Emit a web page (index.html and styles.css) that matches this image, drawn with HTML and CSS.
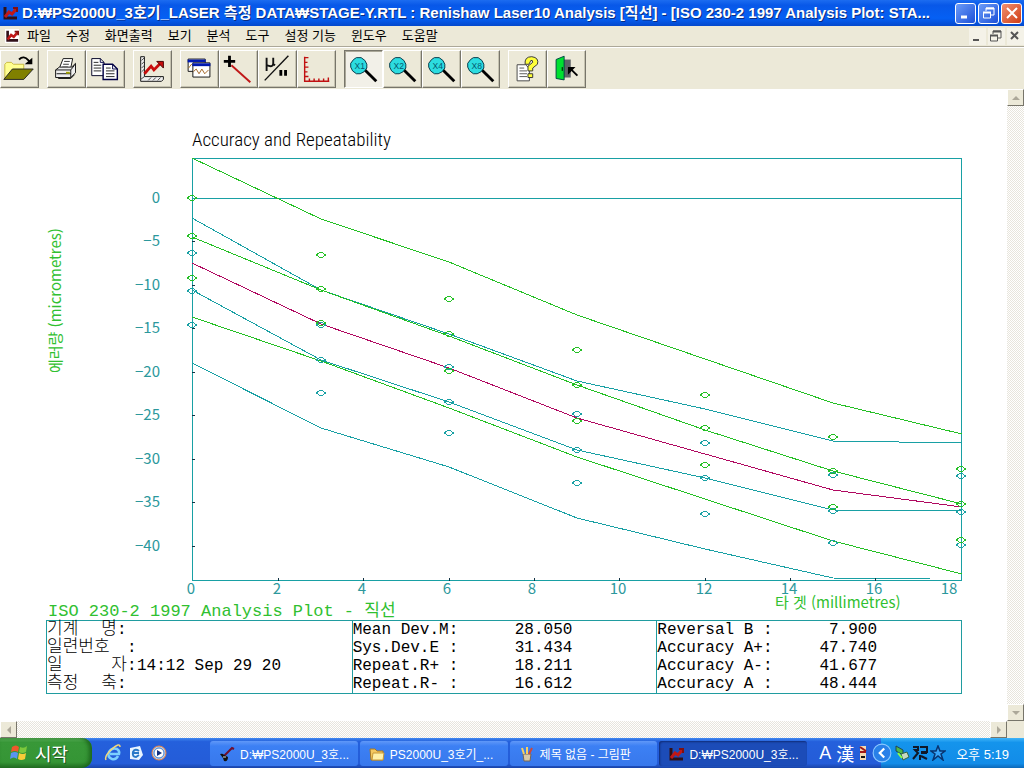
FILE: index.html
```html
<!DOCTYPE html>
<html lang="ko">
<head>
<meta charset="utf-8">
<title>Renishaw Laser10 Analysis</title>
<link rel="stylesheet" href="styles.css">
</head>
<body>
<svg class="defs" aria-hidden="true">
  <defs>
    <symbol id="app" viewBox="0 0 16 16"><path d="M3 2v11h12" fill="none" stroke="#301018" stroke-width="3"/><path d="M3 12l4-5 3 2 5-6" fill="none" stroke="#c01818" stroke-width="3"/><path d="M11 3h4v4" fill="none" stroke="#801010" stroke-width="2"/></symbol>
    <symbol id="lens" viewBox="0 0 39 38"><path d="M21 20l12 12" stroke="#000" stroke-width="3"/><path d="M12 7h5l4 3 2 4v4l-3 4-4 2h-4l-4-3-2-4v-4l3-4z" fill="#2cdce0" stroke="#034" stroke-width="1"/></symbol>
    <symbol id="restore" viewBox="0 0 16 16"><path d="M5 6V3h8v7h-3" fill="none" stroke="currentColor"/><path d="M5 3.500h8M2 7.500h8" stroke="currentColor" stroke-width="2"/><path d="M2.500 7v6h7V7" fill="none" stroke="currentColor"/></symbol>
    <g id="d"><path d="M-5 0L0-3 5 0 0 3z" fill="none"/></g>
  </defs>
</svg>
<div class="window">
  <header class="titlebar">
    <svg class="app-icon"><use href="#app"/></svg>
    <h1 class="title">D:₩PS2000U_3호기_LASER 측정 DATA₩STAGE-Y.RTL : Renishaw Laser10 Analysis [직선] - [ISO 230-2 1997 Analysis Plot: STA...</h1>
    <div class="caption-buttons">
      <button class="cap" aria-label="최소화"><svg viewBox="0 0 16 16"><path d="M3 12h6" stroke="#fff" stroke-width="3"/></svg></button>
      <button class="cap" aria-label="복원"><svg viewBox="0 0 16 16"><use href="#restore"/></svg></button>
      <button class="cap close" aria-label="닫기"><svg viewBox="0 0 16 16"><path d="M3 3l10 10M13 3L3 13" stroke="#fff" stroke-width="2"/></svg></button>
    </div>
  </header>
  <nav class="menubar">
    <svg class="app-icon"><use href="#app"/></svg>
    <button>파일</button><button>수정</button><button>화면출력</button><button>보기</button><button>분석</button><button>도구</button><button>설정 기능</button><button>윈도우</button><button>도움말</button>
    <div class="child-buttons">
      <button aria-label="문서 최소화"><svg viewBox="0 0 16 16"><path d="M4 12h6" stroke="#555" stroke-width="2"/></svg></button>
      <button aria-label="문서 복원"><svg viewBox="0 0 16 16"><use href="#restore"/></svg></button>
      <button aria-label="문서 닫기"><svg viewBox="0 0 16 16"><path d="M4 4l7 7M11 4l-7 7" stroke="#555" stroke-width="2"/></svg></button>
    </div>
  </nav>
  <div class="toolbar" role="toolbar">
    <div class="group">
      <button class="tool" aria-label="열기"><svg viewBox="0 0 39 38"><path d="M4 29V14l2-2h5l2 2h11v5" fill="#ffff90" stroke="#c8b840"/><path d="M3 30l9-11h22l-10 11z" fill="#808000" stroke="#222"/><path d="M19 9q5-5 10 1l3 3" fill="none" stroke="#000" stroke-width="2"/><path d="M33 7v7h-8z"/></svg></button>
    </div>
    <div class="group">
      <button class="tool" aria-label="인쇄"><svg viewBox="0 0 39 38"><path d="M12 18l4-10h10l-2 10z" fill="#fff" stroke="#111"/><path d="M17 11h6M16 14h6M15 17h6" stroke="#333"/><path d="M8 20l4-3h13l4-4v10l-5 5H8z" fill="#eee" stroke="#111"/><path d="M8 20h16l4-5M24 20v8M9 24h15M11 28v1h13l4-4" fill="none" stroke="#111"/><path d="M19 23h4" stroke="#a0a000" stroke-width="2"/></svg></button>
      <button class="tool" aria-label="복사"><svg viewBox="0 0 39 38"><path d="M5 8h9l4 4v14H5z" fill="#fff" stroke="#002"/><path d="M17 14h10l5 5v11H17z" fill="#fff" stroke="#004" stroke-width="1.500"/><path d="M14 8v4h4M27 14v5h5" fill="none" stroke="#004"/><path d="M7 12h5M7 15h8M7 18h8M7 21h8M20 18h5M20 21h9M20 24h9M20 27h9" stroke="#222"/></svg></button>
    </div>
    <div class="group">
      <button class="tool" aria-label="그래프"><svg viewBox="0 0 39 38"><path d="M7 6h4v21h20v3l-2 2H7z" fill="#eee" stroke="#111"/><path d="M7 30l4-3M8 10l3-3M8 14l3-3M8 18l3-3M8 22l3-3M15 31l3-3M20 31l3-3M25 31l3-3" stroke="#444"/><path d="M11 24l7-8 3 4 8-8" fill="none" stroke="#c80c0c" stroke-width="3"/><path d="M24 11h7v7z" fill="#c80c0c" stroke="#400"/></svg></button>
    </div>
    <div class="group">
      <button class="tool" aria-label="창"><svg viewBox="0 0 39 38"><path d="M7.500 8.500h18v13h-18z" fill="#fff" stroke="#111"/><path d="M7 9h19v3H7z" fill="#0018b0"/><path d="M8 18l3-4 4 4" fill="none" stroke="#aa7020"/><path d="M12.500 12.500h18v15h-18z" fill="#fff" stroke="#111"/><path d="M12 13h19v3H12z" fill="#0018b0"/><path d="M13 22l3-3 3 5 3-5 3 5 4-4" fill="none" stroke="#a06020"/></svg></button>
      <button class="tool" aria-label="점"><svg viewBox="0 0 39 38"><path d="M12 15l20 18" stroke="#c01818" stroke-width="2"/><path d="M10 5v12M4 11h12" stroke="#000" stroke-width="3"/></svg></button>
      <button class="tool" aria-label="단위"><svg viewBox="0 0 39 38"><path d="M31 5L6 31" stroke="#111" stroke-width="1.500"/><path d="M8 7v14M8 15q7 3 7-2V7m0 7l2 1" fill="none" stroke="#111" stroke-width="2"/><path d="M23 20v6M28 20v6" stroke="#000" stroke-width="3"/></svg></button>
      <button class="tool" aria-label="눈금"><svg viewBox="0 0 39 38"><path d="M7 6v26h26M7 7h4M7 12h3M7 17h4M7 22h3M7 27h4M12 32v-3M17 32v-3M22 32v-3M27 32v-3M32 32v-4" fill="none" stroke="#c01010" stroke-width="1.500"/></svg></button>
    </div>
    <div class="group">
      <button class="tool pressed" aria-pressed="true"><svg viewBox="0 0 39 38"><use href="#lens"/><text x="10" y="19">X1</text></svg></button>
      <button class="tool"><svg viewBox="0 0 39 38"><use href="#lens"/><text x="10" y="19">X2</text></svg></button>
      <button class="tool"><svg viewBox="0 0 39 38"><use href="#lens"/><text x="10" y="19">X4</text></svg></button>
      <button class="tool"><svg viewBox="0 0 39 38"><use href="#lens"/><text x="10" y="19">X8</text></svg></button>
    </div>
    <div class="group">
      <button class="tool" aria-label="도움말"><svg viewBox="0 0 39 38"><path d="M8.500 14.500h9l4 4v13h-13z" fill="#fff" stroke="#444"/><path d="M11 18h5M11 21h8M11 24h8M11 27h8" stroke="#555"/><path d="M17 14q-1-8 7-8 8 1 6 8l-5 4v3h-5v-5l5-4q0-3-2-2l-2 4zM20 24h5v4h-5z" fill="#ffff38" stroke="#333"/></svg></button>
      <button class="tool" aria-label="종료"><svg viewBox="0 0 39 38"><path d="M16 9h8v19h-8z" fill="#606468"/><path d="M8.500 9L17 5.500v25L8.500 29z" fill="#00e030" stroke="#044"/><path d="M15 17v4" stroke="#000"/><path d="M31 26l-8-8" stroke="#000" stroke-width="2"/><path d="M21 17h8l-8 8z"/></svg></button>
    </div>
  </div>
  <div class="workspace">
    <main class="sheet">
      <svg class="chart" viewBox="0 89 1007 531" role="img" aria-label="Accuracy and Repeatability">
        <text class="chart-title" x="192" y="146">Accuracy and Repeatability</text>
        <g class="line teal">
          <path d="M192 158.500H961.500V580H192.500V158M192 198.500H962"/>
          <path d="M192 218L321 290 449 334 577 381 705 409 833 441 898 441 899 442 962 442"/>
          <path d="M192 290L321 360 449 402 577 450 705 478 833 510 962 511"/>
          <path d="M192 363L321 428 449 467 577 518 705 549 833 578 930 579"/>
          <path class="ticks" d="M192 241h3M192 285h3M192 328h3M192 372h3M192 415h3M192 459h3M192 502h3M192 546h3M278 578v3M363 578v3M449 578v3M534 578v3M619 578v3M705 578v3M790 578v3M875 578v3"/>
        </g>
        <g class="line green">
          <path d="M192 158L321 219 449 262 577 315 705 359 833 403 962 434"/>
          <path d="M192 237L321 290 449 336 577 385 705 430 833 471 962 504"/>
          <path d="M192 317L321 361 449 408 577 457 705 499 833 541 962 574"/>
        </g>
        <path class="line mean" d="M192 263L321 324 449 368 577 418 705 454 833 490 962 507"/>
        <g class="marks teal">
          <use href="#d" x="192" y="253"/><use href="#d" x="192" y="291"/><use href="#d" x="192" y="325"/>
          <use href="#d" x="321" y="325"/><use href="#d" x="321" y="360"/><use href="#d" x="321" y="393"/>
          <use href="#d" x="449" y="367"/><use href="#d" x="449" y="402"/><use href="#d" x="449" y="433"/>
          <use href="#d" x="577" y="414"/><use href="#d" x="577" y="450"/><use href="#d" x="577" y="483"/>
          <use href="#d" x="705" y="443"/><use href="#d" x="705" y="478"/><use href="#d" x="705" y="514"/>
          <use href="#d" x="833" y="475"/><use href="#d" x="833" y="511"/><use href="#d" x="833" y="543"/>
          <use href="#d" x="961" y="476"/><use href="#d" x="961" y="512"/><use href="#d" x="961" y="545"/>
        </g>
        <g class="marks green">
          <use href="#d" x="192" y="198"/><use href="#d" x="192" y="236"/><use href="#d" x="192" y="278"/>
          <use href="#d" x="321" y="255"/><use href="#d" x="321" y="289"/><use href="#d" x="321" y="323"/>
          <use href="#d" x="449" y="299"/><use href="#d" x="449" y="334"/><use href="#d" x="449" y="371"/>
          <use href="#d" x="577" y="350"/><use href="#d" x="577" y="385"/><use href="#d" x="577" y="421"/>
          <use href="#d" x="705" y="395"/><use href="#d" x="705" y="428"/><use href="#d" x="705" y="465"/>
          <use href="#d" x="833" y="437"/><use href="#d" x="833" y="471"/><use href="#d" x="833" y="507"/>
          <use href="#d" x="961" y="469"/><use href="#d" x="961" y="504"/><use href="#d" x="961" y="540"/>
        </g>
        <g class="scale scale-y">
          <text x="160" y="203">0</text><text x="160" y="246">−5</text><text x="160" y="290">−10</text><text x="160" y="333">−15</text><text x="160" y="377">−20</text><text x="160" y="420">−25</text><text x="160" y="464">−30</text><text x="160" y="507">−35</text><text x="160" y="551">−40</text>
        </g>
        <g class="scale scale-x">
          <text x="191" y="594">0</text><text x="277" y="594">2</text><text x="362" y="594">4</text><text x="447" y="594">6</text><text x="532" y="594">8</text><text x="618" y="594">10</text><text x="704" y="594">12</text><text x="789" y="594">14</text><text x="874" y="594">16</text><text x="949" y="594">18</text>
        </g>
        <text class="axis-title" transform="translate(61 373) rotate(-90)">에러량 (micrometres)</text>
        <text class="axis-title" x="775" y="608">타 겟 (millimetres)</text>
        <text class="report-title" x="48" y="616">ISO 230-2 1997 Analysis Plot - 직선</text>
      </svg>
      <div class="report">
        <table class="panel info">
          <tr><th><span class="short">기계 명</span>:</th><td></td></tr>
          <tr><th><span>일련번호</span>:</th><td></td></tr>
          <tr><th><span>일 자</span>:</th><td>14:12 Sep 29 20</td></tr>
          <tr><th><span class="short">측정 축</span>:</th><td></td></tr>
        </table>
        <table class="panel">
          <tr><th>Mean Dev.M:</th><td>28.050</td></tr>
          <tr><th>Sys.Dev.E :</th><td>31.434</td></tr>
          <tr><th>Repeat.R+ :</th><td>18.211</td></tr>
          <tr><th>Repeat.R- :</th><td>16.612</td></tr>
        </table>
        <table class="panel">
          <tr><th>Reversal B :</th><td>7.900</td></tr>
          <tr><th>Accuracy A+:</th><td>47.740</td></tr>
          <tr><th>Accuracy A-:</th><td>41.677</td></tr>
          <tr><th>Accuracy A :</th><td>48.444</td></tr>
        </table>
      </div>
    </main>
    <div class="scrollbar vertical">
      <button aria-label="위로"><svg viewBox="0 0 8 8"><path d="M0 6l4-4 4 4z"/></svg></button>
      <button aria-label="아래로"><svg viewBox="0 0 8 8"><path d="M0 2l4 4 4-4z"/></svg></button>
    </div>
    <div class="scrollbar horizontal">
      <button aria-label="왼쪽으로"><svg viewBox="0 0 8 8"><path d="M6 0L2 4l4 4z"/></svg></button>
      <button aria-label="오른쪽으로"><svg viewBox="0 0 8 8"><path d="M2 0l4 4-4 4z"/></svg></button>
    </div>
    <div class="corner"></div>
  </div>
  <footer class="taskbar">
    <button class="start"><svg viewBox="0 0 20 20"><path d="M3 4q4-3 7 0L9 9Q6 7 2 9z" fill="#f0582c"/><path d="M11 4q4 2 7-1l-1 6q-4 2-7 0z" fill="#7cc83c"/><path d="M2 10q4-2 7 0l-1 6q-3-3-7 0z" fill="#5a94f0"/><path d="M10 10q4 2 7 0l-1 6q-4 2-7 0z" fill="#f8cc38"/></svg>시작</button>
    <div class="quick">
      <button aria-label="Internet Explorer"><svg viewBox="0 0 18 18"><path d="M14 12q-2 4-6 3-5-2-3-7 3-5 8-3 3 2 2 5H6" fill="none" stroke="#7cd0ff" stroke-width="2.500"/><path d="M2 16Q0 12 8 5t8-2" fill="none" stroke="#f4d878" stroke-width="1.500"/></svg></button>
      <button aria-label="Outlook"><svg viewBox="0 0 18 18"><path d="M3 4l10-2 3 9-4 5-9-1z" fill="#e8f4ff"/><path d="M12 7q-4-3-6 1-1 5 3 5l3-2M6 9h6" fill="none" stroke="#2878c8" stroke-width="2"/></svg></button>
      <button aria-label="Media Player"><svg viewBox="0 0 18 18"><circle cx="9" cy="9" r="7" fill="#b8cce8" stroke="#e88040"/><circle cx="9" cy="9" r="5" fill="#fff" stroke="#4080d0"/><path d="M7 6l5 3-5 3z" fill="#103080"/></svg></button>
    </div>
    <div class="tasks">
      <button class="task"><svg viewBox="0 0 16 16"><path d="M5 10l8-8 2 1" fill="none" stroke="#701030" stroke-width="2"/><path d="M1 8q3-1 4 1l4 2q0 5-4 4l-1-3z" fill="#111"/><path d="M4 11h3" stroke="#ddd"/></svg><span>D:₩PS2000U_3호...</span></button>
      <button class="task"><svg viewBox="0 0 16 16"><path d="M1 3h5l2 2h6v9H2z" fill="#f4c860" stroke="#a87820"/><path d="M4 7h11l-1 7H3z" fill="#fff0a8" stroke="#c89838"/></svg><span>PS2000U_3호기_...</span></button>
      <button class="task"><svg viewBox="0 0 16 16"><path d="M4 8h8l-1 7H5z" fill="#d8c8a8" stroke="#765"/><path d="M5 8L3 2M8 8V1" stroke="#f8d060" stroke-width="2"/><path d="M10 8l3-6" stroke="#d04838" stroke-width="2"/></svg><span>제목 없음 - 그림판</span></button>
      <button class="task active"><svg><use href="#app"/></svg><span>D:₩PS2000U_3호...</span></button>
    </div>
    <div class="ime"><span>A</span><span>漢</span><svg viewBox="0 0 8 18"><path d="M1 2h6v14H1z" fill="#f4d8b0"/><path d="M1 3l6 4M1 8h6" stroke="#a01818" stroke-width="2"/><path d="M2 13h4" stroke="#111" stroke-width="2"/></svg></div>
    <div class="tray">
      <button class="expand" aria-label="숨겨진 아이콘 표시"><svg viewBox="0 0 18 18"><circle cx="9" cy="9" r="8" fill="#2880e8" stroke="#8cc8ff"/><path d="M11 5L7 9l4 4" fill="none" stroke="#fff" stroke-width="2"/></svg></button>
      <svg viewBox="0 0 16 16"><path d="M2 1l7 4v5L2 6z" fill="#50b848" stroke="#245"/><path d="M7 9l6-2 2 5-6 3z" fill="#c8d8c0" stroke="#364"/><path d="M4 8l4 5" stroke="#8f4" stroke-width="2"/></svg>
      <svg viewBox="0 0 16 16"><path d="M1 2h5v3H3l3 3-5 6M8 2h7v5H9M9 8h6M9 11l6 3M8 10v5" fill="none" stroke="#101828" stroke-width="2"/></svg>
      <svg viewBox="0 0 16 16"><path d="M8 1l2 5h5l-4 3 2 6-5-4-5 4 2-6-4-3h5z" fill="#38a4f8" stroke="#083470" stroke-width="1.500"/></svg>
      <time>오후 5:19</time>
    </div>
  </footer>
</div>
</body>
</html>
```
FILE: styles.css
```css
* { box-sizing: border-box; }
html, body { height: 100%; }
body { margin: 0; background: #fff; color: #000; font-family: "Liberation Sans", "Noto Sans CJK KR", sans-serif; }
button { margin: 0; padding: 0; border: 0; background: none; color: inherit; font: inherit; }
svg { display: block; flex: none; }
.defs { position: absolute; width: 0; height: 0; }
.window { display: flex; flex-direction: column; min-height: 100vh; }

.titlebar { display: flex; align-items: center; gap: 4px; height: 26px; padding: 0 2px; background: linear-gradient(#1c6cf0, #0858e8 20%, #0560f4 70%, #0448cc); color: #fff; }
.app-icon { width: 16px; height: 16px; }
.title { flex: 1; min-width: 0; margin: 0; overflow: hidden; text-overflow: ellipsis; white-space: nowrap; font-size: 15px; line-height: 24px; font-weight: 700; text-shadow: 1px 1px #0a2c80; }
.caption-buttons { display: flex; gap: 2px; padding-left: 8px; }
.cap { display: grid; place-items: center; width: 21px; height: 21px; border: 1px solid #fff; border-radius: 3px; background: linear-gradient(135deg, #6c9cf8, #1c50d8); }
.cap svg { width: 16px; height: 16px; }
.close { background: linear-gradient(135deg, #f09070, #d03c14); }

.menubar { display: flex; align-items: center; gap: 15px; height: 21px; padding-left: 5px; background: #ece9d8; border-bottom: 1px solid #aca899; font-size: 13px; line-height: 18px; }
.menubar .app-icon { width: 14px; height: 14px; margin-right: -7px; background: #fff; }
.menubar button { white-space: nowrap; }
.child-buttons { display: flex; gap: 2px; margin-left: auto; color: #555; }
.child-buttons button { width: 17px; height: 17px; background: #f4f2e8; }
.child-buttons svg { width: 16px; height: 16px; }

.toolbar { display: flex; gap: 8px; height: 42px; padding: 2px 0; background: #ece9d8; border-top: 1px solid #fff; }
.group { display: flex; }
.tool { width: 39px; height: 38px; border: 1px solid; border-color: #fff #77756a #77756a #fff; box-shadow: inset -1px -1px #c5c2b0; }
.tool svg { width: 37px; height: 36px; }
.tool text { font: 9px "Liberation Sans", sans-serif; fill: #045a70; }
.pressed { border-color: #77756a #fff #fff #77756a; box-shadow: inset 1px 1px #aaa798; background: #f2f0e8; }

.workspace { flex: 1; display: grid; grid-template-columns: minmax(0, 1fr) 17px; grid-template-rows: 1fr 17px; }
.sheet { background: #fff; padding-bottom: 16px; }
.chart { width: 100%; height: auto; }
.line, .marks { fill: none; stroke-width: 1; shape-rendering: crispEdges; }
.teal { stroke: #18a0a4; }
.green { stroke: #24c024; }
.mean { stroke: #b00860; }
.ticks { stroke: #134; }
.chart-title { font: 300 19px "Roboto Condensed", "Noto Sans CJK KR", sans-serif; }
.scale { font: 15px "Noto Sans CJK KR", sans-serif; fill: #2c989c; }
.scale-y { text-anchor: end; }
.scale-x { text-anchor: middle; }
.axis-title { font: 15px "Noto Sans CJK KR", sans-serif; fill: #30c030; }
.report-title { font: 17px "Liberation Mono", "Noto Sans CJK KR", monospace; fill: #30c030; }

.report { display: grid; grid-template-columns: repeat(3, 1fr); margin: 0 45px 0 46px; border: 1px solid #209ca0; font: 16px/18px "Liberation Mono", "Noto Sans CJK KR", monospace; }
.panel { width: 100%; border-collapse: separate; border-spacing: 0; align-self: start; }
.panel + .panel { border-left: 1px solid #209ca0; padding-right: 84px; }
.panel th, .panel td { height: 18px; padding: 0; font-weight: 400; line-height: 17px; text-align: left; white-space: pre; }
.panel th { width: 130px; }
.panel td { width: 90px; text-align: right; }
.info th { width: 90px; }
.info th span { display: inline-block; width: 80px; font-size: 17px; font-weight: 300; white-space: nowrap; text-align-last: justify; }
.info th .short { width: 70px; }
.info td { width: auto; text-align: left; }

.scrollbar { display: flex; justify-content: space-between; background: repeating-conic-gradient(#fff 0 25%, #e8e5dc 0 50%) 0 0 / 2px 2px; }
.vertical { flex-direction: column; }
.scrollbar button { display: grid; place-items: center; width: 17px; height: 17px; background: #ece9d8; border: 1px solid; border-color: #fff #77756a #77756a #fff; }
.scrollbar svg { width: 8px; height: 8px; fill: #aca899; }
.corner { background: #ece9d8; }

.taskbar { display: flex; height: 30px; background: linear-gradient(#4088f0, #2460dc 12%, #245cd8 85%, #1a44a8); color: #fff; font-size: 13px; }
.start { display: flex; align-items: center; gap: 6px; width: 92px; padding-left: 9px; border-radius: 0 10px 10px 0; background: linear-gradient(#60b860, #389838 15%, #359535 80%, #247024); box-shadow: inset -3px 0 4px #1c661c; font-size: 18px; text-shadow: 1px 1px #1c501c; }
.start svg { width: 20px; height: 20px; }
.quick { display: flex; align-items: center; gap: 5px; width: 118px; padding-left: 12px; }
.quick svg { width: 18px; height: 18px; }
.tasks { flex: 1; min-width: 0; display: flex; gap: 2px; padding: 3px 8px 2px 0; }
.task { flex: 1; min-width: 0; display: flex; align-items: center; gap: 5px; padding-left: 9px; border-radius: 3px; background: linear-gradient(#6098f8, #3c80f4 20%, #3878ec); font-size: 12px; white-space: nowrap; overflow: hidden; }
.task svg { width: 16px; height: 16px; }
.active { background: #1c4cb8; box-shadow: inset 1px 1px 2px #102c78; }
.ime { display: flex; align-items: center; gap: 5px; width: 66px; padding-left: 4px; font-size: 18px; }
.ime svg { width: 8px; height: 18px; }
.tray { display: flex; align-items: center; gap: 2px; padding-right: 15px; background: linear-gradient(#40b4f8, #1494ec 15%, #128ce8 85%, #0c68b8); }
.tray svg { width: 16px; height: 16px; }
.expand { margin-left: -9px; }
.tray .expand svg { width: 20px; height: 20px; }
.tray time { margin-left: 8px; white-space: nowrap; }
```
